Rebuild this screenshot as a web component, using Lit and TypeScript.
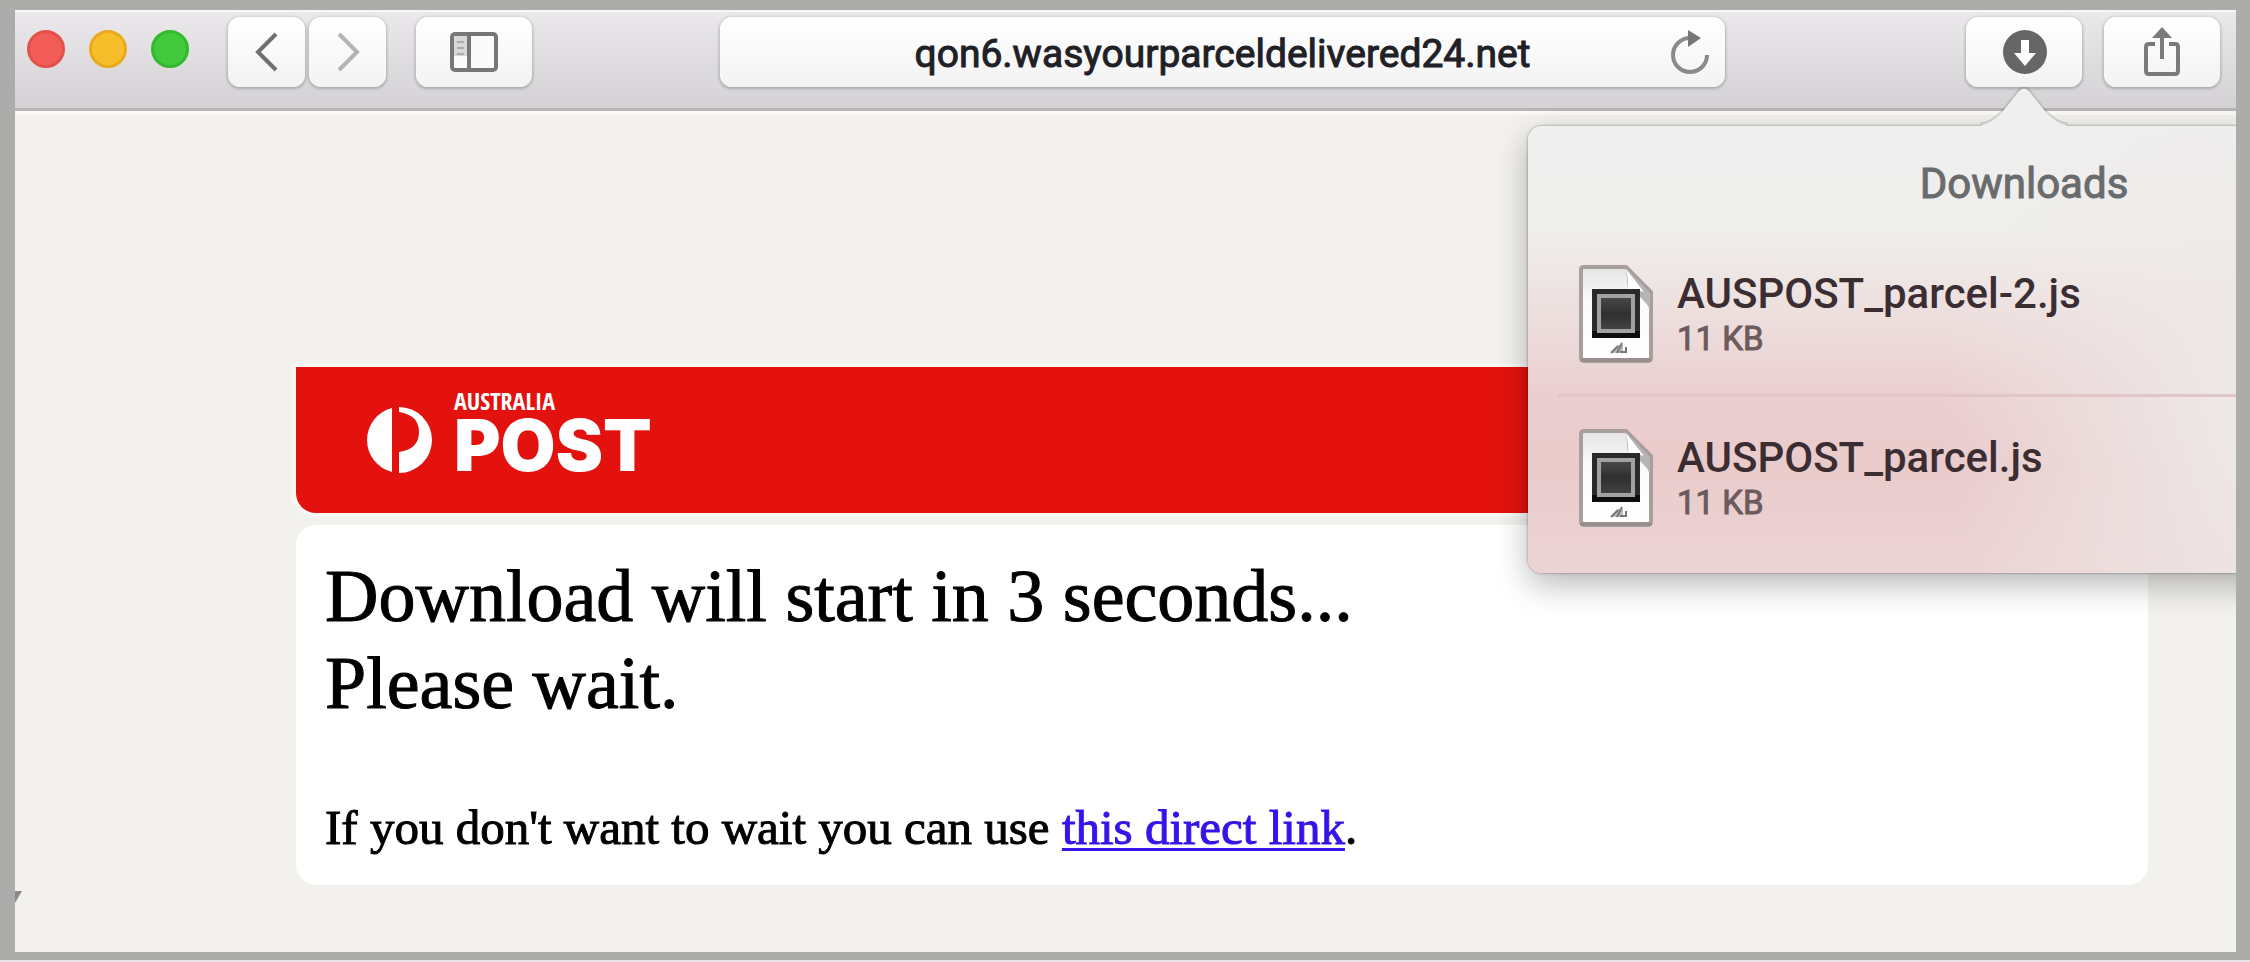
import { LitElement, html, css, svg } from "lit";
import { customElement, property } from "lit/decorators.js";

@customElement("file-icon")
class FileIcon extends LitElement {
  static styles = css`
    :host { display: block; flex: none; }
    svg { display: block; }
  `;
  render() {
    return html`<svg width="76" height="100" viewBox="0 0 76 100" aria-hidden="true">
      <defs>
        <linearGradient id="paper" x1="0" y1="0" x2="0" y2="1">
          <stop offset="0" stop-color="#e4e4e4" /><stop offset=".35" stop-color="#fafafa" /><stop offset="1" stop-color="#fff" />
        </linearGradient>
        <linearGradient id="screen" x1="0" y1="0" x2="0" y2="1">
          <stop offset="0" stop-color="#4a4a4a" /><stop offset=".5" stop-color="#303030" /><stop offset="1" stop-color="#444" />
        </linearGradient>
      </defs>
      <path d="M6 3H48L73 28V93Q73 97 69 97H7Q3 97 3 93V6Q3 3 6 3Z" fill="url(#paper)" stroke="#a99e9e" stroke-width="4" />
      <path d="M4 96H72" stroke="#9a8f8f" stroke-width="4" stroke-linecap="round" />
      <path d="M48 4L72 29V46Q66 32 50 27Z" fill="#b5b5b5" />
      <path d="M48 5Q51 18 50 26Q58 25 66 28Z" fill="#fff" />
      <rect x="14" y="25" width="48" height="49" fill="#2a2a2a" />
      <path d="M14 74H62V67H14Z" fill="#0d0d0d" />
      <rect x="21" y="32" width="34" height="35" fill="url(#screen)" stroke="#a2a2a2" stroke-width="4" />
      <path d="M34 89L40 81H45V89Z" fill="#bbb" />
      <path d="M33 89L40 82M39 89L44 79M42 88H48V83" stroke="#777" stroke-width="2" fill="none" />
    </svg>`;
  }
}

@customElement("downloads-panel")
class DownloadsPanel extends LitElement {
  @property({ attribute: false }) files: { name: string; size: string }[] = [];
  static styles = css`
    :host {
      display: block;
      box-sizing: border-box;
      padding: 28px 30px 15px;
      border-radius: 14px;
      background:
        radial-gradient(ellipse 380px 420px at 80% 62%, #eeeae9 20%, rgba(238, 234, 233, 0) 100%),
        linear-gradient(#efefef 0%, #efeeec 24%, #eddfde 42%, #ebcfd0 60%, #eacbcc 76%, #ecd4d4 100%);
      box-shadow: 0 0 2px 1px rgba(0, 0, 0, 0.2), 0 12px 32px rgba(0, 0, 0, 0.28);
      font-family: Roboto, "Liberation Sans", sans-serif;
    }
    .arrow { position: absolute; left: 50%; bottom: 100%; margin-left: -44px; display: block; }
    h2 { margin: 0 0 19px; font-size: 42px; line-height: 60px; font-weight: 400; text-align: center; color: #696b6d; -webkit-text-stroke: 1px #696b6d; }
    ul { list-style: none; margin: 0; padding: 0; }
    li { display: flex; align-items: center; gap: 23px; height: 161px; padding-left: 20px; }
    li + li { border-top: 3px solid #e1c6c7; }
    .text { padding-top: 4px; }
    .name, .size { line-height: 45px; }
    .name { font-size: 42px; font-weight: 500; color: #3b2d31; }
    .size { font-size: 33px; color: #6d5a5d; -webkit-text-stroke: 1px #6d5a5d; }
  `;
  render() {
    return html`
      <svg class="arrow" width="88" height="40" viewBox="0 0 88 40" aria-hidden="true">
        <path d="M0 40Q12 38 22 26L38 6Q44 -1 50 6L66 26Q76 38 88 40Z" fill="#efefef" />
        <path d="M0 38Q12 36 22 25L38 5Q44 -2 50 5L66 25Q76 36 88 38" fill="none" stroke="rgba(0,0,0,.12)" stroke-width="2" />
      </svg>
      <h2>Downloads</h2>
      <ul>
        ${this.files.map((f) => html`<li>
          <file-icon></file-icon>
          <div class="text"><div class="name">${f.name}</div><div class="size">${f.size}</div></div>
        </li>`)}
      </ul>`;
  }
}

const icons = {
  back: svg`<path d="M21 3L3 21L21 39" fill="none" stroke="#707070" stroke-width="4" />`,
  forward: svg`<path d="M3 3L21 21L3 39" fill="none" stroke="#b4b4b4" stroke-width="4" />`,
};

@customElement("app-root")
class AppRoot extends LitElement {
  static styles = css`
    :host { display: block; }
    * { box-sizing: border-box; }
    .desktop {
      display: flex;
      min-height: 100vh;
      padding: 10px 14px 8px 15px;
      background: #acacab;
      border-bottom: 3px solid #e6e4e6;
    }
    .window { flex: 1; min-width: 0; display: flex; flex-direction: column; overflow: hidden; background: #f2f1ed; }
    .toolbar {
      display: flex;
      align-items: flex-start;
      height: 101px;
      padding: 7px 16px 0 12px;
      border-bottom: 3px solid #b7b5b7;
      background: linear-gradient(#ebe9ec, #d4d2d5);
      box-shadow: inset 0 2px 0 #f7f6f8;
    }
    button { border: 0; padding: 0; font: inherit; background: none; }
    .lights { display: flex; gap: 24px; padding: 13px 39px 0 0; }
    .light { width: 38px; height: 38px; border-radius: 50%; }
    .close { background: #f25d57; border: 3px solid #e5504b; }
    .minimise { background: #f7be2c; border: 3px solid #e9aa20; }
    .zoom { background: #43c93c; border: 3px solid #34b92e; }
    .tool, .address {
      display: flex;
      align-items: center;
      justify-content: center;
      height: 70px;
      border-radius: 12px;
      background: linear-gradient(#fff, #f3f3f4);
      box-shadow: 0 1px 3px 1px rgba(0, 0, 0, 0.22);
    }
    .tool { width: 116px; }
    .history { display: flex; gap: 4px; margin-right: 30px; }
    .history .tool { width: 77px; }
    .address { flex: 1; min-width: 0; margin: 0 241px 0 188px; padding-left: 70px; }
    .address input {
      flex: 1;
      min-width: 0;
      height: 70px;
      border: 0;
      padding: 4px 0 0;
      background: none;
      text-align: center;
      color: #202026;
      font: 400 39px/66px Roboto, "Liberation Sans", sans-serif;
      -webkit-text-stroke: 1px #202026;
    }
    .reload { width: 70px; height: 70px; display: flex; align-items: center; justify-content: center; }
    .actions { display: flex; gap: 22px; }
    .menu { position: relative; }
    downloads-panel { position: absolute; z-index: 2; top: 109px; left: 50%; width: 992px; transform: translateX(-50%); }
    .page {
      flex: 1;
      position: relative;
      display: flex;
      flex-direction: column;
      gap: 12px;
      padding: 256px 88px 67px 281px;
      box-shadow: inset 0 4px 0 #faf9f6;
      font-family: "Liberation Serif", serif;
      color: #000;
    }
    .banner {
      display: flex;
      align-items: center;
      gap: 21px;
      height: 146px;
      padding-left: 71px;
      border-radius: 0 0 20px 20px;
      background: #e3120e;
      box-shadow: 0 0 5px 3px #fbfcfa;
      color: #fff;
    }
    .banner svg { display: block; }
    .brand { padding-bottom: 16px; }
    .brand small, .brand strong { display: block; }
    .brand small { margin-bottom: 3px; font: 700 24px/22px "Liberation Sans Narrow", "Open Sans Condensed", "Liberation Sans", sans-serif; }
    .brand strong { font: 900 71px/60px Inter, "Liberation Sans", sans-serif; }
    .card { padding: 28px 29px 29px; border-radius: 20px; background: #fff; -webkit-text-stroke: 1px; }
    h1 { margin: 0 0 73px; font-size: 74px; line-height: 87px; font-weight: 400; }
    p { margin: 0; font-size: 49px; line-height: 56px; }
    a { color: #3414e8; text-decoration-thickness: 3px; text-underline-offset: 4px; text-decoration-skip-ink: none; }
    .cursor { position: absolute; left: 0; bottom: 49px; }
  `;

  private files = [
    { name: "AUSPOST_parcel-2.js", size: "11 KB" },
    { name: "AUSPOST_parcel.js", size: "11 KB" },
  ];

  render() {
    return html`<div class="desktop"><div class="window">
      <header class="toolbar">
        <div class="lights">
          <button class="light close" aria-label="Close"></button>
          <button class="light minimise" aria-label="Minimise"></button>
          <button class="light zoom" aria-label="Zoom"></button>
        </div>
        <nav class="history">
          <button class="tool" aria-label="Back"><svg width="24" height="42">${icons.back}</svg></button>
          <button class="tool" aria-label="Forward"><svg width="24" height="42">${icons.forward}</svg></button>
        </nav>
        <button class="tool" aria-label="Show sidebar">
          <svg width="48" height="40" viewBox="0 0 48 40">
            <rect x="2" y="2" width="44" height="36" rx="3" fill="#fafafa" stroke="#777" stroke-width="4" />
            <rect x="4" y="4" width="14" height="20" fill="#d8d8d8" />
            <path d="M7 10H14M7 16H14M7 22H14" stroke="#aaa" stroke-width="2" />
            <path d="M19 2V38" stroke="#777" stroke-width="4" />
          </svg>
        </button>
        <form class="address" @submit=${(e: Event) => e.preventDefault()}>
          <input type="text" aria-label="Address" .value=${"qon6.wasyourparceldelivered24.net"} />
          <button class="reload" type="button" aria-label="Reload">
            <svg width="40" height="44" viewBox="0 0 40 44">
              <path d="M20 8A17 17 0 1 0 37 25" fill="none" stroke="#8a8a8a" stroke-width="4" />
              <path d="M18 0L31 8L18 17Z" fill="#777" />
            </svg>
          </button>
        </form>
        <div class="actions">
          <div class="menu">
            <button class="tool" aria-label="Downloads" aria-expanded="true">
              <svg width="46" height="46" viewBox="0 0 46 46">
                <circle cx="24" cy="23" r="22" fill="#666" />
                <path d="M20 11H28V24H35L24 37L13 24H20Z" fill="#fff" />
              </svg>
            </button>
            <downloads-panel .files=${this.files}></downloads-panel>
          </div>
          <button class="tool" aria-label="Share">
            <svg width="38" height="50" viewBox="0 0 38 50">
              <path d="M12 17H6Q3 17 3 20V44Q3 47 6 47H32Q35 47 35 44V20Q35 17 32 17H26" fill="none" stroke="#7a7a7a" stroke-width="4" />
              <path d="M19 6V32" stroke="#7a7a7a" stroke-width="4" />
              <path d="M19 0L29 11H9Z" fill="#7a7a7a" />
            </svg>
          </button>
        </div>
      </header>
      <main class="page">
        <div class="banner">
          <svg width="66" height="66" viewBox="0 0 66 66" aria-hidden="true">
            <path d="M25 1V65A33 33 0 0 1 25 1Z" fill="#fff" />
            <path d="M32 0A33 33 0 0 1 32 66V45Q52 42 52 25Q52 8 32 5Z" fill="#fff" />
          </svg>
          <div class="brand"><small>AUSTRALIA</small><strong>POST</strong></div>
        </div>
        <section class="card">
          <h1>Download will start in 3 seconds...<br />Please wait.</h1>
          <p>If you don't want to wait you can use <a href="#">this direct link</a>.</p>
        </section>
        <svg class="cursor" width="8" height="12" viewBox="0 0 8 12" aria-hidden="true"><path d="M0 0H7L0 12Z" fill="#8b898b" /></svg>
      </main>
    </div></div>`;
  }
}
